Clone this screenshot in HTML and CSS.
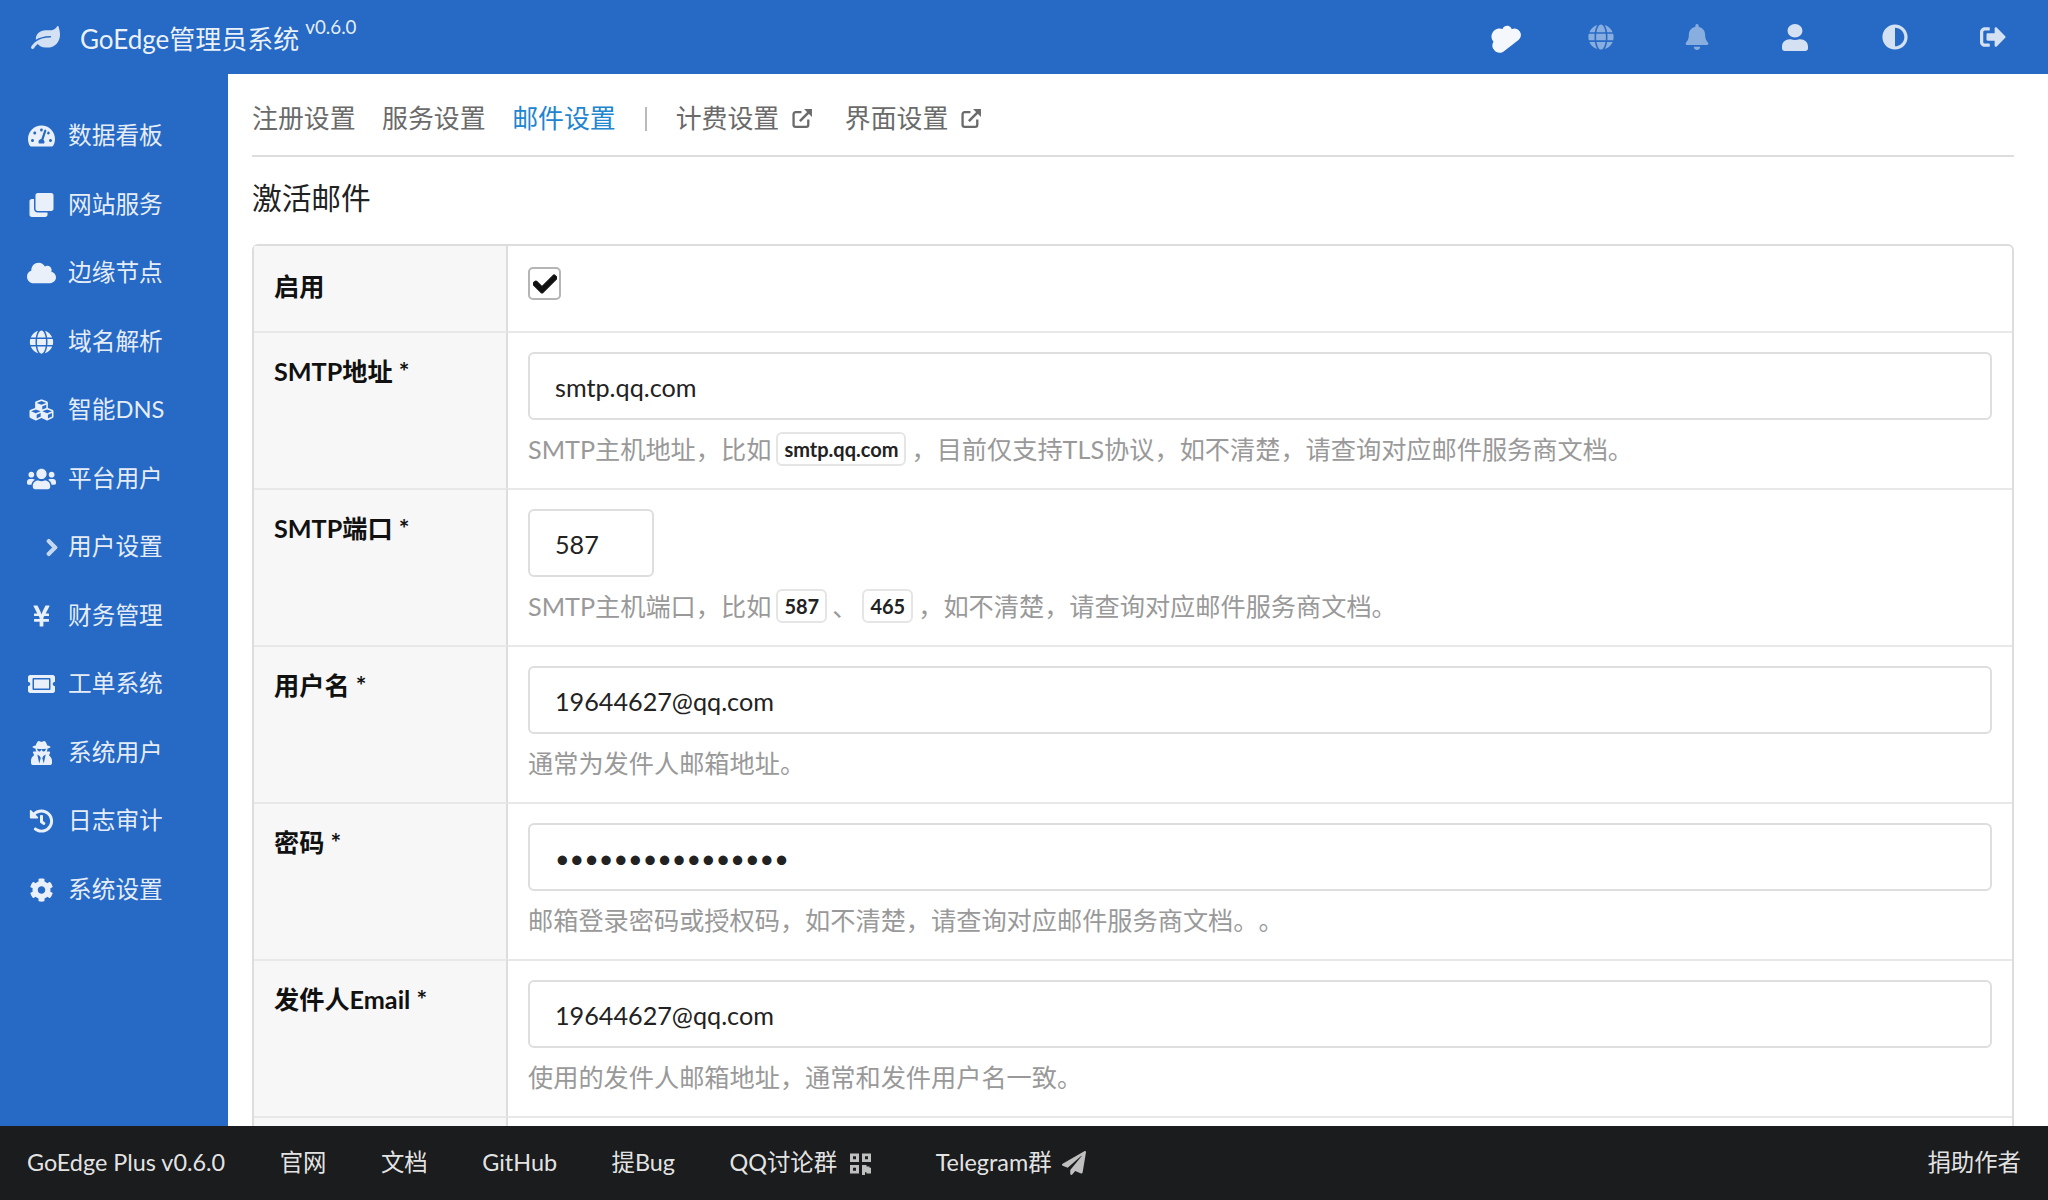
FILE: index.html
```html
<!DOCTYPE html>
<html lang="zh-CN">
<head>
<meta charset="utf-8">
<title>GoEdge管理员系统</title>
<link rel="stylesheet" href="styles.css">
</head>
<body>
<svg class="sprite" aria-hidden="true">
<symbol id="i-leaf" viewBox="0 0 576 512" preserveAspectRatio="none"><path d="M546.2 9.7c-5.6-12.5-21.6-13-28.3-1.2C486.9 62.4 431.4 96 368 96h-80C182 96 96 182 96 288c0 7 .8 13.7 1.5 20.5C161.3 262.8 253.4 224 384 224c8.8 0 16 7.2 16 16s-7.2 16-16 16C132.6 256 26 410.1 2.4 468c-6.6 16.3 1.2 34.9 17.5 41.6 16.4 6.8 35-1.1 41.8-17.3 1.5-3.6 20.9-47.9 71.9-90.6 32.4 43.9 94 85.8 174.9 77.2C465.5 488.1 576 356.4 576 192c0-61.7-13-130.3-29.8-182.3z"/></symbol>
<symbol id="i-dash" viewBox="0 0 576 512"><path d="M288 32C128.94 32 0 160.94 0 320c0 52.8 14.25 102.26 39.06 144.8 5.61 9.62 16.3 15.2 27.44 15.2h443c11.14 0 21.83-5.58 27.44-15.2C561.75 422.26 576 372.8 576 320c0-159.06-128.94-288-288-288zm0 64c14.71 0 26.58 10.13 30.32 23.65-1.11 2.26-2.64 4.23-3.39 6.67l-9.22 27.67c-5.13 3.49-10.97 6.01-17.71 6.01-17.67 0-32-14.33-32-32S270.33 96 288 96zM96 384c-17.67 0-32-14.33-32-32s14.33-32 32-32 32 14.33 32 32-14.33 32-32 32zm48-160c-17.67 0-32-14.33-32-32s14.33-32 32-32 32 14.33 32 32-14.33 32-32 32zm246.77-72.41l-61.33 184C343.13 347.33 352 364.54 352 384c0 11.72-3.38 22.55-8.88 32H232.88c-5.5-9.45-8.88-20.28-8.88-32 0-33.94 26.5-61.43 59.9-63.59l61.34-184.01c4.17-12.56 17.73-19.45 30.36-15.17 12.57 4.19 19.35 17.79 15.17 30.36zm14.66 57.2l15.52-46.55c3.47-1.29 7.13-2.23 11.05-2.23 17.67 0 32 14.33 32 32s-14.33 32-32 32c-11.38-.01-20.89-6.28-26.57-15.22zM480 384c-17.67 0-32-14.33-32-32s14.33-32 32-32 32 14.33 32 32-14.33 32-32 32z"/></symbol>
<symbol id="i-clone" viewBox="0 0 512 512"><path d="M464 0c26.51 0 48 21.49 48 48v288c0 26.51-21.49 48-48 48H176c-26.51 0-48-21.49-48-48V48c0-26.51 21.49-48 48-48h288M176 416c-44.112 0-80-35.888-80-80V128H48c-26.51 0-48 21.49-48 48v288c0 26.51 21.49 48 48 48h288c26.51 0 48-21.49 48-48v-48H176z"/></symbol>
<symbol id="i-cloud" viewBox="0 0 640 512"><path d="M537.6 226.6c4.1-10.7 6.4-22.4 6.4-34.6 0-53-43-96-96-96-19.7 0-38.1 6-53.3 16.2C367 64.2 315.3 32 256 32c-88.4 0-160 71.6-160 160 0 2.7.1 5.4.2 8.1C40.2 219.8 0 273.2 0 336c0 79.5 64.5 144 144 144h368c70.7 0 128-57.3 128-128 0-61.9-44-113.6-102.4-125.4z"/></symbol>
<symbol id="i-globe" viewBox="0 0 496 512"><path d="M336.5 160C322 70.7 287.8 8 248 8s-74 62.7-88.5 152h177zM152 256c0 22.2 1.2 43.5 3.3 64h185.3c2.1-20.5 3.3-41.8 3.3-64s-1.2-43.5-3.3-64H155.3c-2.1 20.5-3.3 41.8-3.3 64zm324.7-96c-28.6-67.9-86.5-120.4-158-141.6 24.4 33.8 41.2 84.7 50 141.6h108zM177.2 18.4C105.8 39.6 47.8 92.1 19.3 160h108c8.7-56.9 25.5-107.8 49.9-141.6zM487.4 192H372.7c2.1 21 3.3 42.5 3.3 64s-1.2 43-3.3 64h114.6c5.5-20.5 8.6-41.8 8.6-64s-3.1-43.5-8.5-64zM120 256c0-21.5 1.2-43 3.3-64H8.6C3.2 212.5 0 233.8 0 256s3.2 43.5 8.6 64h114.6c-2-21-3.2-42.5-3.2-64zm39.5 96c14.5 89.3 48.7 152 88.5 152s74-62.7 88.5-152h-177zm159.3 141.6c71.4-21.2 129.4-73.7 158-141.6h-108c-8.8 56.9-25.6 107.8-50 141.6zM19.3 352c28.6 67.9 86.5 120.4 158 141.6-24.4-33.8-41.2-84.7-50-141.6h-108z"/></symbol>
<symbol id="i-cubes" viewBox="0 0 512 512"><path d="M488.6 250.2L392 214V105.5c0-15-9.3-28.4-23.4-33.7l-100-37.5c-8.1-3.1-17.1-3.1-25.3 0l-100 37.5c-14.1 5.3-23.4 18.7-23.4 33.7V214l-96.6 36.2C9.3 255.5 0 268.9 0 283.9V394c0 13.6 7.7 26.1 19.9 32.2l100 50c10.1 5.1 22.1 5.1 32.2 0l103.9-52 103.9 52c10.1 5.1 22.1 5.1 32.2 0l100-50c12.2-6.1 19.9-18.6 19.9-32.2V283.9c0-15-9.3-28.4-23.4-33.7zM358 214.8l-85 31.9v-68.2l85-37v73.3zM154 104.1l102-38.2 102 38.2v.6l-102 41.4-102-41.4v-.6zm84 291.1l-85 42.5v-79.1l85-38.8v75.4zm0-112l-102 41.4-102-41.4v-.6l102-38.2 102 38.2v.6zm240 112l-85 42.5v-79.1l85-38.8v75.4zm0-112l-102 41.4-102-41.4v-.6l102-38.2 102 38.2v.6z"/></symbol>
<symbol id="i-users" viewBox="0 0 640 512"><path d="M96 224c35.3 0 64-28.7 64-64s-28.7-64-64-64-64 28.7-64 64 28.7 64 64 64zm448 0c35.3 0 64-28.7 64-64s-28.7-64-64-64-64 28.7-64 64 28.7 64 64 64zm32 32h-64c-17.6 0-33.5 7.1-45.1 18.6 40.3 22.1 68.9 62 75.1 109.4h66c17.7 0 32-14.3 32-32v-32c0-35.3-28.7-64-64-64zm-256 0c61.9 0 112-50.1 112-112S381.9 32 320 32 208 82.1 208 144s50.1 112 112 112zm76.8 32h-8.3c-20.8 10-43.9 16-68.5 16s-47.6-6-68.5-16h-8.3C179.6 288 128 339.6 128 403.2V432c0 26.5 21.5 48 48 48h288c26.5 0 48-21.5 48-48v-28.8c0-63.6-51.6-115.2-115.2-115.2zm-223.7-13.4C161.5 263.1 145.6 256 128 256H64c-35.3 0-64 28.7-64 64v32c0 17.7 14.3 32 32 32h65.9c6.3-47.4 34.9-87.3 75.2-109.4z"/></symbol>
<symbol id="i-angle" viewBox="0 0 320 512"><path d="M285.476 272.971L91.132 467.314c-9.373 9.373-24.569 9.373-33.941 0l-22.667-22.667c-9.357-9.357-9.375-24.522-.04-33.901L188.505 256 34.484 101.255c-9.335-9.379-9.317-24.544.04-33.901l22.667-22.667c9.373-9.373 24.569-9.373 33.941 0L285.475 239.03c9.373 9.372 9.373 24.568.001 33.941z"/></symbol>
<symbol id="i-yen" viewBox="0 0 384 512"><path d="M351.2 32h-65.3c-4.6 0-8.8 2.6-10.8 6.7l-55.4 113.2c-14.5 34.7-27.1 71.9-27.1 71.9h-1.2s-12.6-37.2-27.1-71.9L108.8 38.7c-2-4.1-6.2-6.7-10.8-6.7H32.8c-9.1 0-14.9 9.7-10.5 17.7L102.5 200H44c-6.6 0-12 5.4-12 12v32c0 6.6 5.4 12 12 12h88.2l19.8 37.2V320H44c-6.6 0-12 5.4-12 12v32c0 6.6 5.4 12 12 12h108v92c0 6.6 5.4 12 12 12h56c6.6 0 12-5.4 12-12v-92h108c6.6 0 12-5.4 12-12v-32c0-6.6-5.4-12-12-12H232v-26.8l19.8-37.2H340c6.6 0 12-5.4 12-12v-32c0-6.6-5.4-12-12-12h-58.5l80.2-150.3c4.3-8-1.5-17.7-10.5-17.7z"/></symbol>
<symbol id="i-ticket" viewBox="0 0 576 512"><path d="M128 160h320v192H128V160zm400 96c0 26.51 21.49 48 48 48v96c0 26.51-21.49 48-48 48H48c-26.51 0-48-21.49-48-48v-96c26.51 0 48-21.49 48-48s-21.49-48-48-48v-96c0-26.51 21.49-48 48-48h480c26.51 0 48 21.49 48 48v96c-26.51 0-48 21.49-48 48zm-48-104c0-13.255-10.745-24-24-24H120c-13.255 0-24 10.745-24 24v208c0 13.255 10.745 24 24 24h336c13.255 0 24-10.745 24-24V152z"/></symbol>
<symbol id="i-secret" viewBox="0 0 448 512"><path d="M383.9 308.3l23.9-62.6c4-10.5-3.7-21.7-15-21.7h-58.5c11-18.9 17.8-40.6 17.8-64v-.3c39.2-7.8 64-19.1 64-31.7 0-13.3-27.3-25.1-70.1-33-9.2-32.8-27-65.8-40.6-82.8-9.5-11.9-25.9-15.6-39.5-8.8l-27.6 13.8c-9 4.5-19.6 4.5-28.6 0L182.1 3.4c-13.6-6.8-30-3.1-39.5 8.8-13.5 17-31.4 50-40.6 82.8-42.7 7.9-70 19.7-70 33 0 12.6 24.8 23.9 64 31.7v.3c0 23.4 6.8 45.1 17.8 64H56.3c-11.5 0-19.2 11.7-14.7 22.3l25.8 60.2C27.3 329.8 0 372.7 0 422.4v44.8C0 491.9 20.1 512 44.8 512h358.4c24.7 0 44.8-20.1 44.8-44.8v-44.8c0-48.4-25.8-90.4-64.1-114.1zM176 480l-41.6-192 49.6 32 24 40-32 120zm96 0l-32-120 24-40 49.6-32L272 480zm41.7-298.5c-3.9 11.9-7 24.6-16.5 33.4-10.1 9.3-48 22.4-64-25-2.8-8.4-15.4-8.4-18.3 0-17 50.2-56 32.4-64 25-9.5-8.8-12.7-21.5-16.5-33.4-.8-2.5-6.3-5.7-6.3-5.8v-10.8c28.3 3.6 61 5.7 96 5.7s67.7-2.1 96-5.7v10.8c-.1.1-5.6 3.2-6.4 5.8z"/></symbol>
<symbol id="i-history" viewBox="0 0 512 512"><path d="M504 255.531c.253 136.64-111.18 248.372-247.82 248.468-59.015.042-113.223-20.53-155.822-54.911-11.077-8.94-11.905-25.541-1.839-35.607l11.267-11.267c8.609-8.609 22.353-9.551 31.891-1.984C173.062 425.135 212.781 440 256 440c101.705 0 184-82.311 184-184 0-101.705-82.311-184-184-184-48.814 0-93.149 18.969-126.068 49.932l50.754 50.754c10.08 10.08 2.941 27.314-11.313 27.314H24c-8.837 0-16-7.163-16-16V38.627c0-14.254 17.234-21.393 27.314-11.314l49.372 49.372C129.209 34.136 189.552 8 256 8c136.81 0 247.747 110.78 248 247.531zm-180.912 78.784l9.823-12.63c8.138-10.463 6.253-25.542-4.21-33.679L288 256.349V152c0-13.255-10.745-24-24-24h-16c-13.255 0-24 10.745-24 24v135.651l65.409 50.874c10.463 8.137 25.541 6.253 33.679-4.21z"/></symbol>
<symbol id="i-cog" viewBox="0 0 512 512"><path d="M487.4 315.7l-42.6-24.6c4.3-23.2 4.3-47 0-70.2l42.6-24.6c4.9-2.8 7.1-8.6 5.5-14-11.1-35.6-30-67.8-54.7-94.6-3.8-4.1-10-5.1-14.8-2.3L380.8 110c-17.9-15.4-38.5-27.3-60.8-35.1V25.8c0-5.6-3.9-10.5-9.4-11.7-36.7-8.2-74.3-7.8-109.2 0-5.5 1.2-9.4 6.1-9.4 11.7V75c-22.2 7.9-42.8 19.8-60.8 35.1L88.7 85.5c-4.9-2.8-11-1.9-14.8 2.3-24.7 26.7-43.6 58.9-54.7 94.6-1.7 5.4.6 11.2 5.5 14L67.3 221c-4.3 23.2-4.3 47 0 70.2l-42.6 24.6c-4.9 2.8-7.1 8.6-5.5 14 11.1 35.6 30 67.8 54.7 94.6 3.8 4.1 10 5.1 14.8 2.3l42.6-24.6c17.9 15.4 38.5 27.3 60.8 35.1v49.2c0 5.6 3.9 10.5 9.4 11.7 36.7 8.2 74.3 7.8 109.2 0 5.5-1.2 9.4-6.1 9.4-11.7v-49.2c22.2-7.9 42.8-19.8 60.8-35.1l42.6 24.6c4.9 2.8 11 1.9 14.8-2.3 24.7-26.7 43.6-58.9 54.7-94.6 1.5-5.5-.7-11.3-5.6-14.1zM256 336c-44.1 0-80-35.9-80-80s35.9-80 80-80 80 35.9 80 80-35.9 80-80 80z"/></symbol>
<symbol id="i-bell" viewBox="0 0 448 512"><path d="M224 512c35.32 0 63.97-28.65 63.97-64H160.03c0 35.35 28.65 64 63.97 64zm215.39-149.71c-19.32-20.76-55.47-51.99-55.47-154.29 0-77.7-54.48-139.9-127.94-155.16V32c0-17.67-14.32-32-31.98-32s-31.98 14.33-31.98 32v20.84C118.56 68.1 64.08 130.3 64.08 208c0 102.3-36.15 133.53-55.47 154.29-6 6.45-8.66 14.16-8.61 21.71.11 16.4 12.98 32 32.1 32h383.8c19.12 0 32-15.6 32.1-32 .05-7.55-2.61-15.27-8.61-21.71z"/></symbol>
<symbol id="i-user" viewBox="0 0 448 512" preserveAspectRatio="none"><path d="M224 256c70.7 0 128-57.3 128-128S294.7 0 224 0 96 57.3 96 128s57.3 128 128 128zm89.6 32h-16.7c-22.2 10.2-46.9 16-72.9 16s-50.6-5.8-72.9-16h-16.7C60.2 288 0 348.2 0 422.4V464c0 26.5 21.5 48 48 48h352c26.5 0 48-21.5 48-48v-41.6c0-74.2-60.2-134.4-134.4-134.4z"/></symbol>
<symbol id="i-adjust" viewBox="0 0 512 512"><path d="M8 256c0 136.966 111.033 248 248 248s248-111.034 248-248S392.966 8 256 8 8 119.033 8 256zm248 184V72c101.705 0 184 82.311 184 184 0 101.705-82.311 184-184 184z"/></symbol>
<symbol id="i-signout" viewBox="0 0 512 512"><path d="M497 273L329 441c-15 15-41 4.5-41-17v-96H152c-13.3 0-24-10.7-24-24v-96c0-13.3 10.7-24 24-24h136V88c0-21.4 25.9-32 41-17l168 168c9.3 9.4 9.3 24.6 0 34zM192 436v-40c0-6.6-5.4-12-12-12H96c-17.7 0-32-14.3-32-32V160c0-17.7 14.3-32 32-32h84c6.6 0 12-5.4 12-12V76c0-6.6-5.4-12-12-12H96c-53 0-96 43-96 96v192c0 53 43 96 96 96h84c6.6 0 12-5.4 12-12z"/></symbol>
<symbol id="i-qr" viewBox="0 0 448 512" preserveAspectRatio="none"><path d="M0 224h192V32H0v192zM64 96h64v64H64V96zm192-64v192h192V32H256zm128 128h-64V96h64v64zM0 480h192V288H0v192zm64-128h64v64H64v-64zm352 0h32v128h-96v-32h-32v96h-64V288h96v32h64v32zm0 96h32v32h-32v-32zm-64 0h32v32h-32v-32z"/></symbol>
<symbol id="i-plane" viewBox="0 0 512 512"><path d="M476 3.2L12.5 270.6c-18.1 10.4-15.8 35.6 2.2 43.2L121 358.4l287.3-253.2c5.5-4.9 13.3 2.6 8.6 8.3L176 407v80.5c0 23.6 28.5 32.9 42.5 15.8L282 426l124.6 52.2c14.2 6 30.4-2.9 33-18.2l72-432C515 7.8 493.3-6.8 476 3.2z"/></symbol>
<symbol id="i-check" viewBox="0 0 512 512"><path d="M173.898 439.404l-166.4-166.4c-9.997-9.997-9.997-26.206 0-36.204l36.203-36.204c9.997-9.998 26.207-9.998 36.204 0L192 312.69 432.095 72.596c9.997-9.997 26.207-9.997 36.204 0l36.203 36.204c9.997 9.997 9.997 26.206 0 36.204l-294.4 294.401c-9.998 9.997-26.207 9.997-36.204-.001z"/></symbol>
<symbol id="i-ext" viewBox="0 0 20 20"><path d="M15.5 11v5a2 2 0 0 1-2 2h-10a2 2 0 0 1-2-2V6a2 2 0 0 1 2-2H9" fill="none" stroke="currentColor" stroke-width="2.2"/><path d="M7.5 12.5 17 3" fill="none" stroke="currentColor" stroke-width="2.4"/><path d="M11.5 1h7.5v7.5z"/></symbol>
</svg>

<header class="topbar">
  <div class="brand">
    <svg class="brand-leaf"><use href="#i-leaf"/></svg>
    <span class="brand-name">GoEdge管理员系统</span>
    <sup class="brand-ver">v0.6.0</sup>
  </div>
  <nav class="top-icons">
    <span class="top-icon"><svg class="ti ti-cloud"><use href="#i-cloud"/></svg></span>
    <span class="top-icon"><svg class="ti ti-dim"><use href="#i-globe"/></svg></span>
    <span class="top-icon"><svg class="ti ti-dim ti-shift"><use href="#i-bell"/></svg></span>
    <span class="top-icon"><svg class="ti ti-user ti-shift"><use href="#i-user"/></svg></span>
    <span class="top-icon"><svg class="ti"><use href="#i-adjust"/></svg></span>
    <span class="top-icon"><svg class="ti"><use href="#i-signout"/></svg></span>
  </nav>
</header>

<div class="layout">
  <aside class="sidebar">
    <a class="side-item"><svg class="si"><use href="#i-dash"/></svg><span>数据看板</span></a>
    <a class="side-item"><svg class="si"><use href="#i-clone"/></svg><span>网站服务</span></a>
    <a class="side-item"><svg class="si"><use href="#i-cloud"/></svg><span>边缘节点</span></a>
    <a class="side-item"><svg class="si"><use href="#i-globe"/></svg><span>域名解析</span></a>
    <a class="side-item"><svg class="si"><use href="#i-cubes"/></svg><span>智能DNS</span></a>
    <a class="side-item"><svg class="si"><use href="#i-users"/></svg><span>平台用户</span></a>
    <a class="side-item"><svg class="si si-angle"><use href="#i-angle"/></svg><span>用户设置</span></a>
    <a class="side-item"><svg class="si"><use href="#i-yen"/></svg><span>财务管理</span></a>
    <a class="side-item"><svg class="si"><use href="#i-ticket"/></svg><span>工单系统</span></a>
    <a class="side-item"><svg class="si"><use href="#i-secret"/></svg><span>系统用户</span></a>
    <a class="side-item"><svg class="si"><use href="#i-history"/></svg><span>日志审计</span></a>
    <a class="side-item"><svg class="si"><use href="#i-cog"/></svg><span>系统设置</span></a>
  </aside>

  <main class="main">
    <nav class="tabs">
      <a class="tab">注册设置</a>
      <a class="tab">服务设置</a>
      <a class="tab tab-active">邮件设置</a>
      <span class="tab-sep"></span>
      <a class="tab">计费设置<svg class="ext"><use href="#i-ext"/></svg></a>
      <a class="tab">界面设置<svg class="ext"><use href="#i-ext"/></svg></a>
    </nav>
    <h3 class="section-title">激活邮件</h3>
    <table class="form-table">
      <tr class="row-enable">
        <td class="label label-mid">启用</td>
        <td class="field"><span class="checkbox"><svg class="check"><use href="#i-check"/></svg></span></td>
      </tr>
      <tr>
        <td class="label">SMTP地址 *</td>
        <td class="field">
          <input class="input" type="text" value="smtp.qq.com">
          <p class="help">SMTP主机地址，比如<code class="pill">smtp.qq.com</code>，目前仅支持TLS协议，如不清楚，请查询对应邮件服务商文档。</p>
        </td>
      </tr>
      <tr>
        <td class="label">SMTP端口 *</td>
        <td class="field">
          <input class="input input-port" type="text" value="587">
          <p class="help">SMTP主机端口，比如<code class="pill">587</code>、<code class="pill">465</code>，如不清楚，请查询对应邮件服务商文档。</p>
        </td>
      </tr>
      <tr>
        <td class="label">用户名 *</td>
        <td class="field">
          <input class="input" type="text" value="19644627@qq.com">
          <p class="help">通常为发件人邮箱地址。</p>
        </td>
      </tr>
      <tr>
        <td class="label">密码 *</td>
        <td class="field">
          <input class="input" type="password" value="abcdefghijklmnop">
          <p class="help">邮箱登录密码或授权码，如不清楚，请查询对应邮件服务商文档。。</p>
        </td>
      </tr>
      <tr>
        <td class="label">发件人Email *</td>
        <td class="field">
          <input class="input" type="text" value="19644627@qq.com">
          <p class="help">使用的发件人邮箱地址，通常和发件用户名一致。</p>
        </td>
      </tr>
      <tr class="row-next">
        <td class="label"></td>
        <td class="field"></td>
      </tr>
    </table>
  </main>
</div>

<footer class="footer">
  <a class="foot-link">GoEdge Plus v0.6.0</a>
  <a class="foot-link">官网</a>
  <a class="foot-link">文档</a>
  <a class="foot-link">GitHub</a>
  <a class="foot-link">提Bug</a>
  <a class="foot-link">QQ讨论群<svg class="foot-qr"><use href="#i-qr"/></svg></a>
  <a class="foot-link">Telegram群<svg class="foot-plane"><use href="#i-plane"/></svg></a>
  <a class="foot-link foot-right">捐助作者</a>
</footer>
</body>
</html>
```

FILE: styles.css
```css
* { box-sizing: border-box; }
html, body { height: 100%; }
body {
  margin: 0;
  height: 1200px;
  display: flex;
  flex-direction: column;
  overflow: hidden;
  background: #fff;
  font-family: Lato, "Noto Sans CJK SC", sans-serif;
  font-size: 24px;
  color: #222;
  text-spacing-trim: space-all;
}
.sprite { display: none; }
svg { fill: currentColor; display: block; }

.topbar {
  height: 74px;
  flex: none;
  display: flex;
  align-items: center;
  background: #276ac6;
  color: #fff;
}
.brand { display: flex; align-items: center; padding-left: 31px; flex: 1; }
.brand-leaf { width: 29px; height: 23px; opacity: .8; margin-right: 20px; }
.brand-name { font-size: 26px; color: rgba(255,255,255,.92); line-height: 1; margin-top: 3px; }
.brand-ver { font-size: 18.8px; color: rgba(255,255,255,.9); margin: -20px 0 0 6px; line-height: 1; }
.top-icons { display: flex; padding-right: 6px; }
.top-icon { width: 98px; height: 74px; display: flex; align-items: center; justify-content: center; }
.ti { width: 26px; height: 26px; opacity: .8; }
.ti-cloud { width: 32px; height: 26px; opacity: .95; margin-left: 2px; transform: rotate(-38deg); }
.ti-dim { opacity: .45; }
.ti-user { width: 26px; height: 27px; }
.ti-shift { margin-right: 4px; }

.layout { flex: 1; display: flex; min-height: 0; }
.sidebar {
  width: 228px;
  flex: none;
  background: #276ac6;
  padding-top: 28px;
  color: rgba(255,255,255,.9);
}
.side-item {
  height: 68.5px;
  display: flex;
  align-items: center;
  padding-left: 27px;
  font-size: 23.7px;
  line-height: 1;
}
.si { width: 29px; height: 24px; margin-right: 12px; }
.si-angle {
  width: 14px;
  height: 19px;
  margin-left: 18px;
  margin-right: 9px;
  opacity: .8;
  stroke: currentColor;
  stroke-width: 30px;
}

.main { flex: 1; min-width: 0; padding: 0 34px 0 24px; overflow: hidden; }
.tabs {
  height: 83px;
  padding-top: 8px;
  display: flex;
  align-items: center;
  gap: 26.5px;
  border-bottom: 2px solid #ddd;
}
.tab { display: flex; align-items: center; font-size: 25.9px; color: #6a6a6a; line-height: 1; }
.tab-active { color: #2185d0; }
.tab-sep { width: 2px; height: 24px; background: #bbb; margin: 0 2px 0 3px; }
.ext { width: 21px; height: 21px; margin: 0 5px 0 13px; color: #6a6a6a; }
.section-title {
  margin: 0;
  height: 87px;
  display: flex;
  align-items: center;
  font-size: 29.7px;
  font-weight: 400;
  color: #222;
  line-height: 1;
  padding-bottom: 6px;
}

.form-table {
  width: 100%;
  border-collapse: separate;
  border-spacing: 0;
  border: 2px solid #ddd;
  border-radius: 6px;
  table-layout: fixed;
}
.form-table td { border-top: 2px solid #e8e8e8; vertical-align: top; padding: 0; }
.form-table tr:first-child td { border-top: 0; }
.label {
  width: 254px;
  background: #f7f7f7;
  border-right: 2px solid #ddd;
  padding: 20px 20px 0 20px !important;
  font-weight: 700;
  font-size: 25.2px;
  line-height: 36px;
  color: #111;
}
.form-table .label-mid { vertical-align: middle; padding-top: 0 !important; padding-bottom: 6px !important; height: 85px; }
.field { padding: 19px 20px 20px 20px !important; }
.form-table .row-enable .field { padding-top: 21px !important; padding-bottom: 0 !important; }
.row-next td { height: 40px; }
.checkbox {
  display: flex;
  align-items: center;
  justify-content: center;
  width: 33px;
  height: 33px;
  border: 2px solid #b5b5b5;
  border-radius: 5px;
  background: #fff;
}
.check { width: 24px; height: 24px; color: #111; stroke: currentColor; stroke-width: 26px; }
.input {
  display: block;
  width: 100%;
  height: 68px;
  padding: 2px 25px 0;
  border: 2px solid #dedede;
  border-radius: 6px;
  background: #fff;
  font-family: Lato, "Noto Sans CJK SC", sans-serif;
  font-size: 25.2px;
  color: #222;
  outline: 0;
}
.input-port { width: 126px; }
.help {
  margin: 11px 0 0;
  height: 36px;
  display: flex;
  align-items: center;
  font-size: 25.2px;
  line-height: 36px;
  color: #999;
  white-space: nowrap;
}
.pill {
  display: inline-flex;
  align-items: center;
  height: 34px;
  padding: 0 6px;
  margin: 0 5px;
  border: 2px solid #e5e5e5;
  border-radius: 6px;
  background: #fff;
  font-family: Lato, "Noto Sans CJK SC", sans-serif;
  font-size: 20px;
  font-weight: 700;
  color: #222;
}
.row-enable + tr .help, .help { padding-bottom: 0; }
.form-table tr:not(.row-enable):not(.row-next) .field { padding-bottom: 21px !important; }

.footer {
  height: 74px;
  flex: none;
  display: flex;
  align-items: center;
  gap: 54.5px;
  padding: 0 27px;
  background: #1b1c1d;
  color: rgba(255,255,255,.9);
  font-size: 23.4px;
}
.foot-link { display: flex; align-items: center; line-height: 1; }
.foot-qr { width: 21px; height: 23px; margin: 0 10px 0 13px; opacity: .8; }
.foot-plane { width: 24px; height: 24px; margin-left: 10px; opacity: .8; }
.foot-right { margin-left: auto; }
```
